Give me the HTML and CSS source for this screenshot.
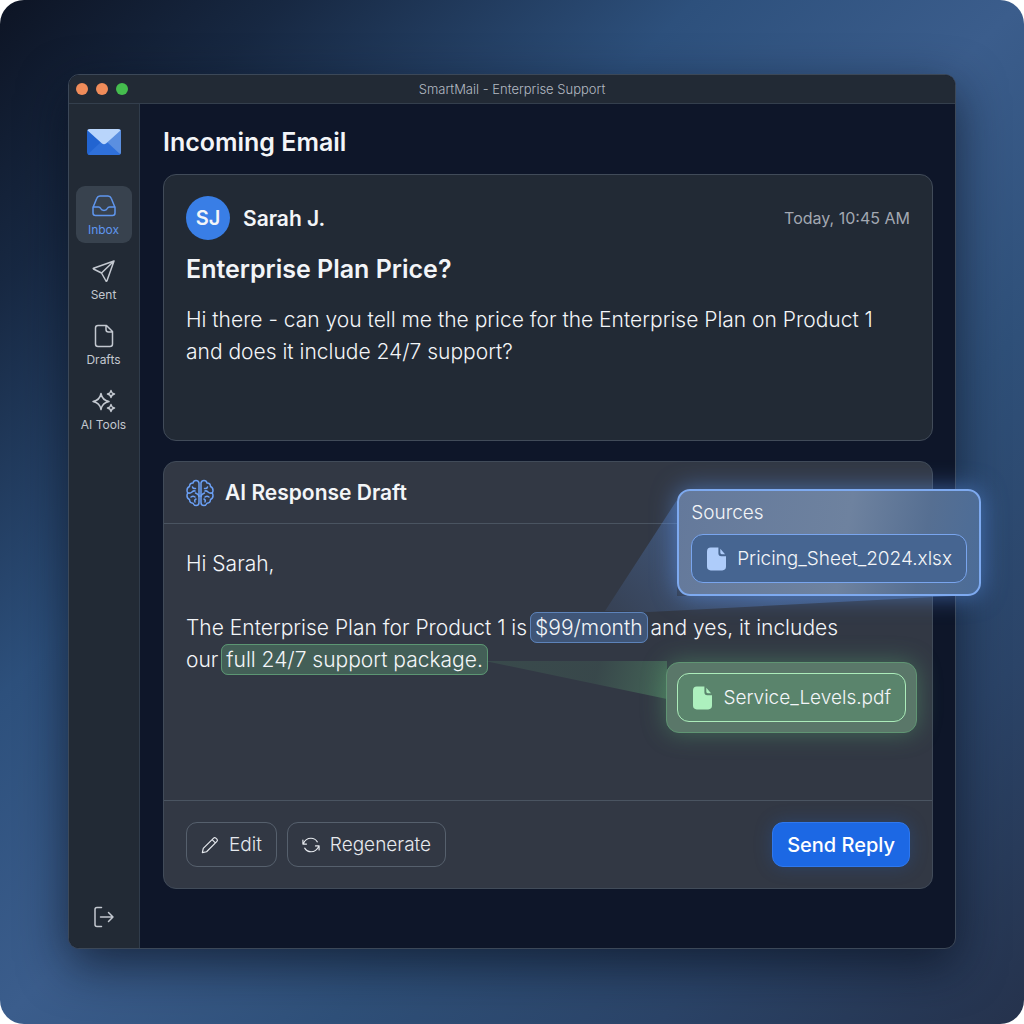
FILE: index.html
```html
<!DOCTYPE html>
<html lang="en">
<head>
<meta charset="utf-8">
<meta name="viewport" content="width=device-width, initial-scale=1">
<title>SmartMail - Enterprise Support</title>
<link rel="stylesheet" href="styles.css">
</head>
<body>
<div class="backdrop">
  <div class="window">
    <header class="titlebar">
      <div class="lights"><span class="light"></span><span class="light"></span><span class="light light-green"></span></div>
      <span class="titlebar-text">SmartMail - Enterprise Support</span>
    </header>
    <div class="shell">
      <nav class="sidebar" aria-label="Mailboxes">
        <svg class="logo" viewBox="0 0 34 26" aria-hidden="true">
          <defs><clipPath id="logo-clip"><rect width="34" height="26" rx="3"/></clipPath></defs>
          <g clip-path="url(#logo-clip)">
            <rect width="34" height="26" fill="#2264d1"/>
            <path d="M34 0v26L17 14z" fill="#5b8fe0"/>
            <path d="M0 26 14 13h6l14 13z" fill="#2f70da"/>
            <path d="M0 0h34v1L19 14.500q-2 1.500-4 0L0 1z" fill="#b9d5fb"/>
          </g>
        </svg>
        <a class="nav-item nav-active" href="#inbox">
          <svg class="icon" viewBox="0 0 24 24"><path d="M1 13.500 4.800 4.200Q5.600 2 8 2h8q2.400 0 3.200 2.200L23 13.500V19q0 2.500-2.500 2.500h-17Q1 21.500 1 19zM1 13h5.500q1.500 0 2 1.300 1 2.200 3.500 2.200t3.500-2.200q.500-1.300 2-1.300H23"/></svg>
          <span>Inbox</span>
        </a>
        <a class="nav-item" href="#sent">
          <svg class="icon" viewBox="0 0 24 24"><path d="M22 2 1.500 9.200q-.6.300 0 .8L9.500 14l4.500 8q.5.700.9 0zM22 2 9.500 14"/></svg>
          <span>Sent</span>
        </a>
        <a class="nav-item" href="#drafts">
          <svg class="icon" viewBox="0 0 24 24"><path d="M6 1.500h8.500l6 6V20q0 2.500-2.500 2.500H6Q3.500 22.500 3.500 20V4Q3.500 1.500 6 1.500zM14 2v3.500q0 2.500 2.500 2.500h4"/></svg>
          <span>Drafts</span>
        </a>
        <a class="nav-item" href="#ai-tools">
          <svg class="icon" viewBox="0 0 24 24"><path d="M9 4.500q1.200 6.800 8 8-6.800 1.200-8 8-1.200-6.800-8-8 6.800-1.200 8-8zM19 1.500q.5 3 3.500 3.500-3 .5-3.500 3.500-.5-3-3.500-3.500 3-.5 3.500-3.500zM19 15.500q.5 3 3.500 3.500-3 .5-3.500 3.500-.5-3-3.500-3.500 3-.5 3.500-3.500z"/></svg>
          <span>AI Tools</span>
        </a>
        <a class="logout" href="#logout" aria-label="Log out">
          <svg class="icon" viewBox="0 0 24 24"><path d="M9.500 2.500H5q-2 0-2 2v15q0 2 2 2h4.500M8.500 12H21M16.500 7.500l4.500 4.500-4.500 4.500"/></svg>
        </a>
      </nav>
      <main class="main">
        <h1 class="page-title">Incoming Email</h1>
        <article class="card email">
          <div class="sender">
            <span class="avatar">SJ</span>
            <span class="sender-name">Sarah J.</span>
            <time class="time">Today, 10:45 AM</time>
          </div>
          <h2 class="subject">Enterprise Plan Price?</h2>
          <p class="copy">Hi there - can you tell me the price for the Enterprise Plan on Product 1 and does it include 24/7 support?</p>
        </article>
        <section class="card draft">
          <header class="draft-head">
            <svg class="brain" viewBox="0 0 28 28" aria-hidden="true">
              <path d="M13 4q-.5-2.500-3-2.500T7 4Q3.500 4 3.500 7.500 1 8.500 1 11.500q0 1.500.8 2.500-.8 1-.8 2.800 0 2.700 2.500 3.700 0 3.500 3.500 3.700Q8 26.500 10.200 26.500 13 26.500 13 23.500zM15 4q.5-2.500 3-2.500T21 4q3.500 0 3.500 3.500Q27 8.500 27 11.500q0 1.500-.8 2.500.8 1 .8 2.800 0 2.700-2.500 3.700 0 3.500-3.500 3.700-1 2.300-3.200 2.300-2.800 0-2.800-3z"/>
              <path d="M6.500 8q.5 2 3 1.500M2 14q2.500.5 4-1t3-1M13 17.500q0-2-3.500-3.500M5 18q2-1.500 4 0M9 23q-1-2 1-3M21.500 8q-.5 2-3 1.500M26 14q-2.500.5-4-1t-3-1M15 17.500q0-2 3.500-3.500M23 18q-2-1.500-4 0M19 23q1-2-1-3"/>
            </svg>
            <h2 class="draft-title">AI Response Draft</h2>
          </header>
          <div class="draft-body">
            <p class="copy">Hi Sarah,</p>
            <p class="copy">The Enterprise Plan for Product 1 is <mark class="cite cite-blue">$99/month</mark> and yes, it includes<br>our <mark class="cite cite-green">full 24/7 support package.</mark></p>
          </div>
          <footer class="draft-foot">
            <button class="btn" type="button">
              <svg class="btn-icon" viewBox="0 0 20 20"><path d="m1.500 18.500 1-4.700L14 2.300q1.200-1.200 2.500 0l1.200 1.200q1.200 1.300 0 2.500L6.200 17.500zM12.300 4l3.700 3.700"/></svg>
              Edit
            </button>
            <button class="btn" type="button">
              <svg class="btn-icon" viewBox="0 0 20 20"><path d="M1 4.500V9h4M1.500 8.500Q4 2.500 10 2.500q4.500 0 7 4M19 15.500V11h-4M18.500 11.500Q16 17.500 10 17.500q-4.500 0-7-4"/></svg>
              Regenerate
            </button>
            <button class="btn btn-primary" type="button">Send Reply</button>
          </footer>
          <svg class="beams" viewBox="0 0 818 428" aria-hidden="true">
            <defs>
              <linearGradient id="beam-blue" gradientUnits="userSpaceOnUse" x1="450" y1="160" x2="540" y2="70">
                <stop offset="0" stop-color="#5b8fe0" stop-opacity=".1"/><stop offset="1" stop-color="#5b8fe0" stop-opacity=".35"/>
              </linearGradient>
              <linearGradient id="beam-green" gradientUnits="userSpaceOnUse" x1="322" y1="190" x2="504" y2="240">
                <stop offset="0" stop-color="#5fa873" stop-opacity=".16"/><stop offset=".6" stop-color="#5fa873" stop-opacity=".14"/><stop offset="1" stop-color="#5fa873" stop-opacity=".4"/>
              </linearGradient>
            </defs>
            <path d="M442 150 514 39V135H790L486 151z" fill="url(#beam-blue)"/>
            <path d="M322 200H504V238z" fill="url(#beam-green)"/>
          </svg>
          <aside class="pop pop-blue">
            <h3 class="pop-title">Sources</h3>
            <a class="file" href="#pricing-sheet">
              <svg class="file-icon" viewBox="0 0 20 24"><path d="M4 0h8v6q0 3 3 3h5v11q0 4-4 4H4q-4 0-4-4V4q0-4 4-4zM14 1.200 19 7h-3.500Q14 7 14 5.500z"/></svg>
              Pricing_Sheet_2024.xlsx
            </a>
          </aside>
          <aside class="pop pop-green">
            <a class="file" href="#service-levels">
              <svg class="file-icon" viewBox="0 0 20 24"><path d="M4 0h8v6q0 3 3 3h5v11q0 4-4 4H4q-4 0-4-4V4q0-4 4-4zM14 1.200 19 7h-3.500Q14 7 14 5.500z"/></svg>
              Service_Levels.pdf
            </a>
          </aside>
        </section>
      </main>
    </div>
  </div>
</div>
</body>
</html>
```
FILE: styles.css
```css
* { box-sizing: border-box; }

body {
  margin: 0;
  background: #fff;
  color: #f3f5f8;
  font-family: Inter, "Liberation Sans", sans-serif;
}

h1, h2, h3, p { margin: 0; }
a { color: inherit; text-decoration: none; }

.backdrop {
  display: flex;
  min-height: 100vh;
  padding: 74px 68px 75px;
  border-radius: 24px;
  background: linear-gradient(135deg, #0d1424 0%, #172842 14%, #2d507c 34%, #3b5d8c 50%, #2f5079 66%, #2b4468 82%, #25324c 100%);
}

.window {
  display: flex;
  flex: 1;
  flex-direction: column;
  border: 1px solid #3c4858;
  border-radius: 11px;
  background: #0e1629;
  box-shadow: 0 16px 48px rgba(8, 14, 28, .65);
}

.titlebar {
  display: grid;
  grid-template-columns: 1fr auto 1fr;
  align-items: center;
  height: 29px;
  padding: 0 7px;
  border-bottom: 1px solid #343f4d;
  border-radius: 10px 10px 0 0;
  background: #222a35;
}
.lights { display: flex; gap: 8px; }
.light { width: 12px; height: 12px; border-radius: 50%; background: #f08c5a; }
.light-green { background: #45bd4e; }
.titlebar-text { font-size: 13px; font-weight: 350; color: #b4bac3; }

.shell { display: flex; flex: 1; }

.sidebar {
  display: flex;
  flex-direction: column;
  align-items: center;
  gap: 8px;
  width: 71px;
  padding: 25px 8px 19px 7px;
  border-right: 1px solid #303c4b;
  border-radius: 0 0 0 10px;
  background: #222a35;
}
.logo { width: 34px; height: 26px; margin-bottom: 23px; }
.nav-item {
  display: flex;
  flex-direction: column;
  align-items: center;
  gap: 4px;
  width: 56px;
  height: 57px;
  padding-top: 8px;
  border-radius: 9px;
  color: #c3c8d0;
  font-size: 12px;
  line-height: 16px;
  white-space: nowrap;
}
.nav-active { background: #38424e; color: #5f96ee; }
.icon { width: 24px; height: 24px; fill: none; stroke: currentColor; stroke-width: 1.5; stroke-linejoin: round; stroke-linecap: round; }
.logout { height: 24px; margin-top: auto; color: #c3c8d0; }

.main { flex: 1; min-width: 0; padding: 22px 22px 59px 23px; }
.page-title { margin-bottom: 16px; font-size: 25px; line-height: 32px; font-weight: 600; }

.card { border: 1px solid #414b59; border-radius: 13px; }
.email { min-height: 267px; margin-bottom: 20px; padding: 21px 22px; background: #222a35; }
.sender { display: flex; align-items: center; gap: 13px; height: 44px; }
.avatar {
  display: grid;
  place-items: center;
  width: 44px;
  height: 44px;
  border-radius: 50%;
  background: #397ee6;
  font-size: 20px;
  font-weight: 600;
}
.sender-name { font-size: 21px; font-weight: 600; }
.time { margin-left: auto; color: #a2a8b2; font-size: 16px; }
.subject { margin: 12px 0 18px; font-size: 25px; line-height: 34px; font-weight: 600; }
.copy { font-size: 21px; line-height: 32px; font-weight: 350; color: #f3f5f8; }

.draft { position: relative; display: flex; flex-direction: column; min-height: 428px; background: #323844; }
.draft-head { display: flex; align-items: center; gap: 11px; height: 62px; padding: 0 22px; border-bottom: 1px solid #4a5461; }
.brain { width: 28px; height: 28px; fill: none; stroke: #6ba0f5; stroke-width: 1.5; stroke-linecap: round; stroke-linejoin: round; }
.draft-title { font-size: 21px; font-weight: 600; }
.draft-body { display: flex; flex: 1; flex-direction: column; gap: 32px; padding: 24px 22px; }

.cite { margin: 0 -3px; padding: 2px 4px; border: 1px solid; border-radius: 7px; color: inherit; }
.cite-blue { border-color: #5d83ba; background: #3f5577; }
.cite-green { border-color: #5c9673; background: #435f57; }

.draft-foot { display: flex; align-items: center; gap: 10px; height: 88px; padding: 0 22px; border-top: 1px solid #4a5461; }
.btn {
  display: flex;
  align-items: center;
  gap: 10px;
  height: 45px;
  padding: 0 14px;
  border: 1px solid #56606d;
  border-radius: 11px;
  background: transparent;
  color: #e6e9ee;
  font: 350 19px/24px Inter, "Liberation Sans", sans-serif;
}
.btn-icon { width: 18px; height: 18px; fill: none; stroke: currentColor; stroke-width: 1.3; stroke-linecap: round; stroke-linejoin: round; }
.btn-primary {
  margin-left: auto;
  border-color: #2f78ee;
  background: #1c68e4;
  color: #fff;
  font-size: 20px;
  font-weight: 500;
  box-shadow: 0 0 18px rgba(36, 96, 190, .3);
}

.beams { position: absolute; top: -1px; left: -1px; width: 818px; height: 428px; pointer-events: none; }
.pop { position: absolute; padding: 11px 12px; border: 2px solid #7eaaf0; border-radius: 13px; }
.pop-blue {
  top: 27px;
  right: -49px;
  background: linear-gradient(100deg, #64799b, #6e829f 55%, #566f92 80%, #4b6c98);
  box-shadow: 0 0 24px rgba(91, 146, 235, .6);
}
.pop-green {
  top: 200px;
  right: 15px;
  padding: 10px;
  border: 1px solid #609573;
  background: #5a7769;
  box-shadow: 0 0 24px rgba(92, 170, 112, .45);
}
.pop-title { margin-bottom: 10px; font-size: 19px; line-height: 22px; font-weight: 300; }
.file {
  display: flex;
  align-items: center;
  gap: 11px;
  height: 49px;
  padding: 0 14px 0 15px;
  border: 1px solid #79a5ee;
  border-radius: 12px;
  background: #466591;
  font-size: 19px;
  font-weight: 300;
  white-space: nowrap;
}
.file-icon { width: 19px; height: 24px; fill: #aeccfa; }
.pop-green .file { border-color: #acecba; background: #5a846c; }
.pop-green .file-icon { fill: #adf0be; }
```
